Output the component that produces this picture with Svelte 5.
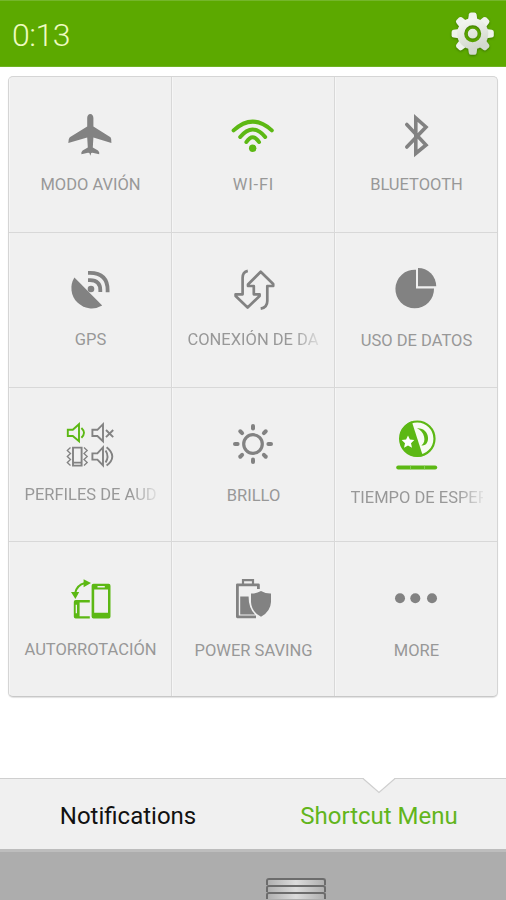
<script>
  const rows = [
    [
      { icon: 'plane', label: 'MODO AVIÓN', drop: 1 },
      { icon: 'wifi', label: 'WI-FI', drop: 1, wide: true },
      { icon: 'bluetooth', label: 'BLUETOOTH', drop: 1 }
    ],
    [
      { icon: 'gps', label: 'GPS', drop: 0 },
      { icon: 'data', label: 'CONEXIÓN DE DA', drop: 0, long: true },
      { icon: 'usage', label: 'USO DE DATOS', drop: 1 }
    ],
    [
      { icon: 'audio', label: 'PERFILES DE AUD', drop: 0, long: true },
      { icon: 'sun', label: 'BRILLO', drop: 1 },
      { icon: 'timeout', label: 'TIEMPO DE ESPER', drop: 3, long: true }
    ],
    [
      { icon: 'rotate', label: 'AUTORROTACIÓN', drop: 1 },
      { icon: 'power', label: 'POWER SAVING', drop: 2 },
      { icon: 'more', label: 'MORE', drop: 2 }
    ]
  ];
  const angles = [0, 45, 90, 135, 180, 225, 270, 315];
  const tops = [102, 258, 413, 567];
  const box = (r, c) => `${60 + c * 163} ${tops[r]} 61 60`;
</script>

<div class="screen">
  <header>
    <span class="clock">0:13</span>
    <svg class="gear" width="46" height="48" viewBox="450 10 46 48">
      <defs>
        <mask id="hole" maskUnits="userSpaceOnUse" x="450" y="10" width="46" height="48">
          <rect x="450" y="10" width="46" height="48" fill="#fff" />
          <circle cx="472.7" cy="33.7" r="6.7" fill="none" stroke="#000" stroke-width="3.6" />
        </mask>
        <linearGradient id="metalFill" gradientUnits="userSpaceOnUse" x1="465" y1="13" x2="480" y2="55">
          <stop offset="0" stop-color="#fbfdf8" />
          <stop offset="1" stop-color="#c9cfc4" />
        </linearGradient>
      </defs>
      <g mask="url(#hole)">
        {#each angles as a}
          <path d="M467.8 22 L468.8 14.5 Q469.2 12.6 471 12.6 H474.4 Q476.2 12.6 476.6 14.5 L477.6 22 Z" fill={a > 90 && a < 225 ? '#d3d9ce' : '#eff3ec'} transform={`rotate(${a} 472.7 33.7)`} />
        {/each}
        <circle cx="472.7" cy="33.7" r="15.6" fill="url(#metalFill)" />
      </g>
    </svg>
  </header>

  <main>
    <div class="card">
      {#each rows as row, r}
        {#each row as tile, c}
          <div class="tile" class:last={c === 2} class:bottom={r === 3}>
            <svg width="61" height="60" viewBox={box(r, c)}>
              {#if tile.icon === 'plane'}
                <path class="g" d="M90.3 114 C92.2 114 93.4 116 93.4 118 V126.6 L110.5 137.3 Q111.8 138.8 111.4 143 L93.4 137.4 L92.8 147.4 L98 150.4 Q99.8 152 99.2 154.2 L92.5 152.8 L91.2 153 L90.3 155.8 L89.4 153 L88 152.8 L81.4 154.2 Q80.8 152 82.6 150.4 L87.8 147.4 L87.2 137.4 L68.3 143 Q68.1 138.8 69.8 137.3 L87.2 126.6 V118 C87.2 116 88.4 114 90.3 114 Z" />
              {:else if tile.icon === 'wifi'}
                <g class="gs" stroke-width="4" stroke-linecap="round">
                  <path d="M233.6 130.4 Q252.7 112.8 271.8 130.4" />
                  <path d="M240.2 137 Q252.7 122 265.2 137" />
                  <path d="M246.4 142 Q252.7 132.6 259 142" />
                </g>
                <circle class="green" cx="252.7" cy="148.3" r="3.7" />
              {:else if tile.icon === 'bluetooth'}
                <path class="s" stroke-width="3.6" stroke-linecap="round" d="M406.8 124.5 L426 145 L415.8 153.4 V118 L426 127 L406.8 147" />
              {:else if tile.icon === 'gps'}
                <path class="g" d="M74.4 277.4 L102.2 305.6 A20.4 20.4 0 0 1 74.4 277.4 Z" />
                <circle class="g" cx="91" cy="289" r="3.3" />
                <g class="s" stroke-width="3.8">
                  <path d="M88 280.1 H90 Q100.3 280.4 100.3 290 V292" />
                  <path d="M88 272.8 H90 Q107.6 273 107.6 290 V292.3" />
                </g>
              {:else if tile.icon === 'data'}
                <g class="s" stroke-width="2.7" stroke-linejoin="round">
                  <path d="M247.8 270.8 Q242.6 271.8 242.6 278 V294.3 H235.6 V296 L247.6 307.5 L259.6 296 V294.3 H253.8 V286 H248 V284.5 L260.7 271.8 L273.2 284 V286 H267.3 V301 Q267.3 307.6 260.7 308.6" />
                </g>
              {:else if tile.icon === 'usage'}
                <path class="g" d="M416 269.8 V288.4 H434 A19.3 19.3 0 1 1 416 269.8 Z" />
                <path class="g" d="M418 268 A18 18.2 0 0 1 436.2 286.2 H418 Z" />
              {:else if tile.icon === 'audio'}
                <g class="s" stroke-width="1.9">
                  <path class="gs" d="M67.8 429.8 V436 H72.8 L79 441.2 V424.2 L72.8 429.8 Z M81.4 428 Q86.6 432.8 81.4 437.8" />
                  <path d="M92.4 429.8 V436 H97.4 L103 441.2 V424.2 L97.4 429.8 Z M106 430 L113.2 437.2 M113.2 430 L106 437.2" />
                  <path d="M92.4 453.4 V459.6 H97.4 L103 465.4 V447.4 L97.4 453.4 Z M105.6 450.4 Q109.4 456.4 105.6 462.5 M106.6 447.2 Q118 456.4 106.6 465.6" />
                  <path d="M73 447.6 H81.6 V465.6 H73 Z M73 462.6 H81.6" />
                  <path stroke-width="1.3" d="M70.5 447.5 L67.3 450.5 L70.5 453.5 L67.3 456.5 L70.5 459.5 L67.3 462.5 L70.5 465.5 M84 447.5 L87.2 450.5 L84 453.5 L87.2 456.5 L84 459.5 L87.2 462.5 L84 465.5" />
                </g>
              {:else if tile.icon === 'sun'}
                <circle class="s" cx="253" cy="444" r="9.3" stroke-width="3.2" />
                {#each angles as a}
                  <path class="s" stroke-width="4" stroke-linecap="round" d="M253 428.6 V426" transform={`rotate(${a} 253 444)`} />
                {/each}
              {:else if tile.icon === 'timeout'}
                <circle cx="417.3" cy="438.7" r="17.2" fill="#f7fbf3" />
                <circle class="gs" cx="417.3" cy="438.7" r="17.2" stroke-width="2.2" />
                <path class="green" d="M411.7 421.3 L422.9 456.1 A18.3 18.3 0 0 1 411.7 421.3 Z" />
                <path class="green" d="M417 428.2 C431 427.5 431 447 421.4 445.4 C427 442 424.5 431 417 428.2 Z" />
                <path fill="#fff" d="M408 435.4 L409.9 439.6 L414.3 440.1 L411 443.2 L412 447.8 L408 445.4 L404 447.8 L405 443.2 L401.7 440.1 L406.1 439.6 Z" />
                <path class="gs" stroke-width="4" stroke-linecap="round" d="M398.2 467.5 H435.2" />
                <path d="M410.5 465.5 V469.5 M424.5 465.5 V469.5" stroke="#8fd063" stroke-width="0.8" />
              {:else if tile.icon === 'rotate'}
                <path class="green" fill-rule="evenodd" d="M93.5 583.8 H108.6 Q110.5 583.8 110.5 585.7 V616.6 Q110.5 618.5 108.6 618.5 H93.5 Q91.6 618.5 91.6 616.6 V585.7 Q91.6 583.8 93.5 583.8 Z M94.2 589.4 V612.8 H108 V589.4 Z M97.5 586 V587.4 H104.8 V586 Z" />
                <path class="green" fill-rule="evenodd" d="M89.8 600 H75.7 Q73.8 600 73.8 601.9 V616.6 Q73.8 618.5 75.7 618.5 H89.8 V616.2 H79.6 V602.4 H89.8 Z M75.7 604.8 V613.2 H77 V604.8 Z" />
                <path class="gs" stroke-width="2" d="M75 593.5 Q76.6 585 85 583" />
                <path class="green" d="M71 592 H79.2 L75.4 599 Z M83.6 579.3 L91 583 L83.6 587.3 Z" />
              {:else if tile.icon === 'power'}
                <path class="s" stroke-width="2.8" stroke-linejoin="round" d="M258.4 589 V584.8 H237.4 V616.8 H256" />
                <path class="s" stroke-width="2.2" d="M243 584 V580.2 H253 V584" />
                <path class="g" d="M240.2 596.5 H248.6 Q248.5 608 255 614.5 H240.2 Z" />
                <path class="g" d="M261 591 Q265.8 593.8 271 593.6 V602 Q270.6 611.5 261 616.8 Q251.4 611.5 251 602 V593.6 Q256.2 593.8 261 591 Z" />
              {:else}
                <circle class="g" cx="400" cy="598.3" r="5" />
                <circle class="g" cx="415.3" cy="598.3" r="5" />
                <circle class="g" cx="432" cy="598.3" r="5" />
              {/if}
            </svg>
            <span class="label" class:long={tile.long} class:wide={tile.wide} style:margin-top={`${tile.drop + 12}px`}>{tile.label}</span>
          </div>
        {/each}
      {/each}
    </div>
  </main>

  <nav>
    <span class="tab">Notifications</span>
    <span class="tab active">Shortcut Menu</span>
    <svg class="notch" width="36" height="17" viewBox="0 0 36 17">
      <path d="M2 0 L18 14.5 L34 0 Z" fill="#fff" />
      <path d="M1 0.5 H2 L18 14.5 L34 0.5 H35" fill="none" stroke="#cfcfcf" stroke-width="1.2" />
    </svg>
  </nav>

  <footer>
    <div class="handle"><i></i><i></i><i></i></div>
  </footer>
</div>

<style>
  .screen {
    width: 506px;
    height: 900px;
    display: flex;
    flex-direction: column;
    overflow: hidden;
    background: #fff;
    font-family: Roboto, 'Liberation Sans', sans-serif;
  }
  header {
    height: 67px;
    flex: none;
    box-sizing: border-box;
    border-top: 1px solid #74b62b;
    border-bottom: 1px solid #6fb324;
    background: #5ca900;
    display: flex;
    justify-content: space-between;
    padding: 0 10px 0 12px;
  }
  .clock {
    font-size: 32px;
    font-weight: 300;
    line-height: 38px;
    padding-top: 15px;
    letter-spacing: -0.5px;
    color: #effbc0;
  }
  .gear { margin-top: 9px; filter: drop-shadow(0 1px 1px rgba(30, 70, 0, 0.5)); }
  main { height: 711px; flex: none; padding: 9px 8px 0; box-sizing: border-box; }
  .card {
    width: 490px;
    height: 621px;
    box-sizing: border-box;
    display: grid;
    grid-template-columns: repeat(3, 163px);
    grid-template-rows: 156px 155px 154px 154px;
    border: 1px solid #d5d5d5;
    border-bottom-color: #c8c8c8;
    border-radius: 5px;
    background: #f0f0f0;
    box-shadow: 0 1px 1px #e2e2e2;
    overflow: hidden;
  }
  .tile {
    box-sizing: border-box;
    border-right: 1px solid #d8d8d8;
    border-bottom: 1px solid #d8d8d8;
    box-shadow: inset 1px 0 #f6f6f6;
    display: flex;
    flex-direction: column;
    align-items: center;
    padding: 25px 0 0 1px;
  }
  .tile.last { border-right-color: transparent; }
  .tile.bottom { border-bottom: 0; }
  .tile svg { display: block; flex: none; }
  .label {
    font-size: 16.5px;
    line-height: 20px;
    white-space: nowrap;
    color: #989898;
  }
  .wide { letter-spacing: 0.8px; }
  .long {
    width: 132px;
    -webkit-mask-image: linear-gradient(90deg, #000 80%, transparent 104%);
    mask-image: linear-gradient(90deg, #000 80%, transparent 104%);
  }
  .g { fill: #828282; }
  .green { fill: #5cb814; }
  .s { fill: none; stroke: #828282; }
  .gs { fill: none; stroke: #5cb814; }
  nav {
    position: relative;
    height: 71px;
    flex: none;
    box-sizing: border-box;
    border-top: 1px solid #cfcfcf;
    background: #f0f0f0;
    display: flex;
  }
  .tab {
    width: 256px;
    text-align: center;
    font-size: 24px;
    line-height: 74px;
    color: #111;
  }
  .tab.active { width: 246px; color: #62b51c; }
  .notch { position: absolute; left: 361px; top: -1px; }
  footer {
    flex: 1;
    border-top: 3px solid #bdbdbd;
    background: #adadad;
    display: flex;
    justify-content: center;
    padding-left: 86px;
  }
  .handle { width: 60px; margin-top: 26px; display: flex; flex-direction: column; }
  .handle i {
    height: 7px;
    flex: none;
    box-sizing: border-box;
    border: 2px solid #6c6c6c;
    border-bottom: 0;
    border-radius: 3px 3px 0 0;
    background: linear-gradient(90deg, #b0b0b0, #dcdcdc 50%, #b0b0b0);
  }
</style>
